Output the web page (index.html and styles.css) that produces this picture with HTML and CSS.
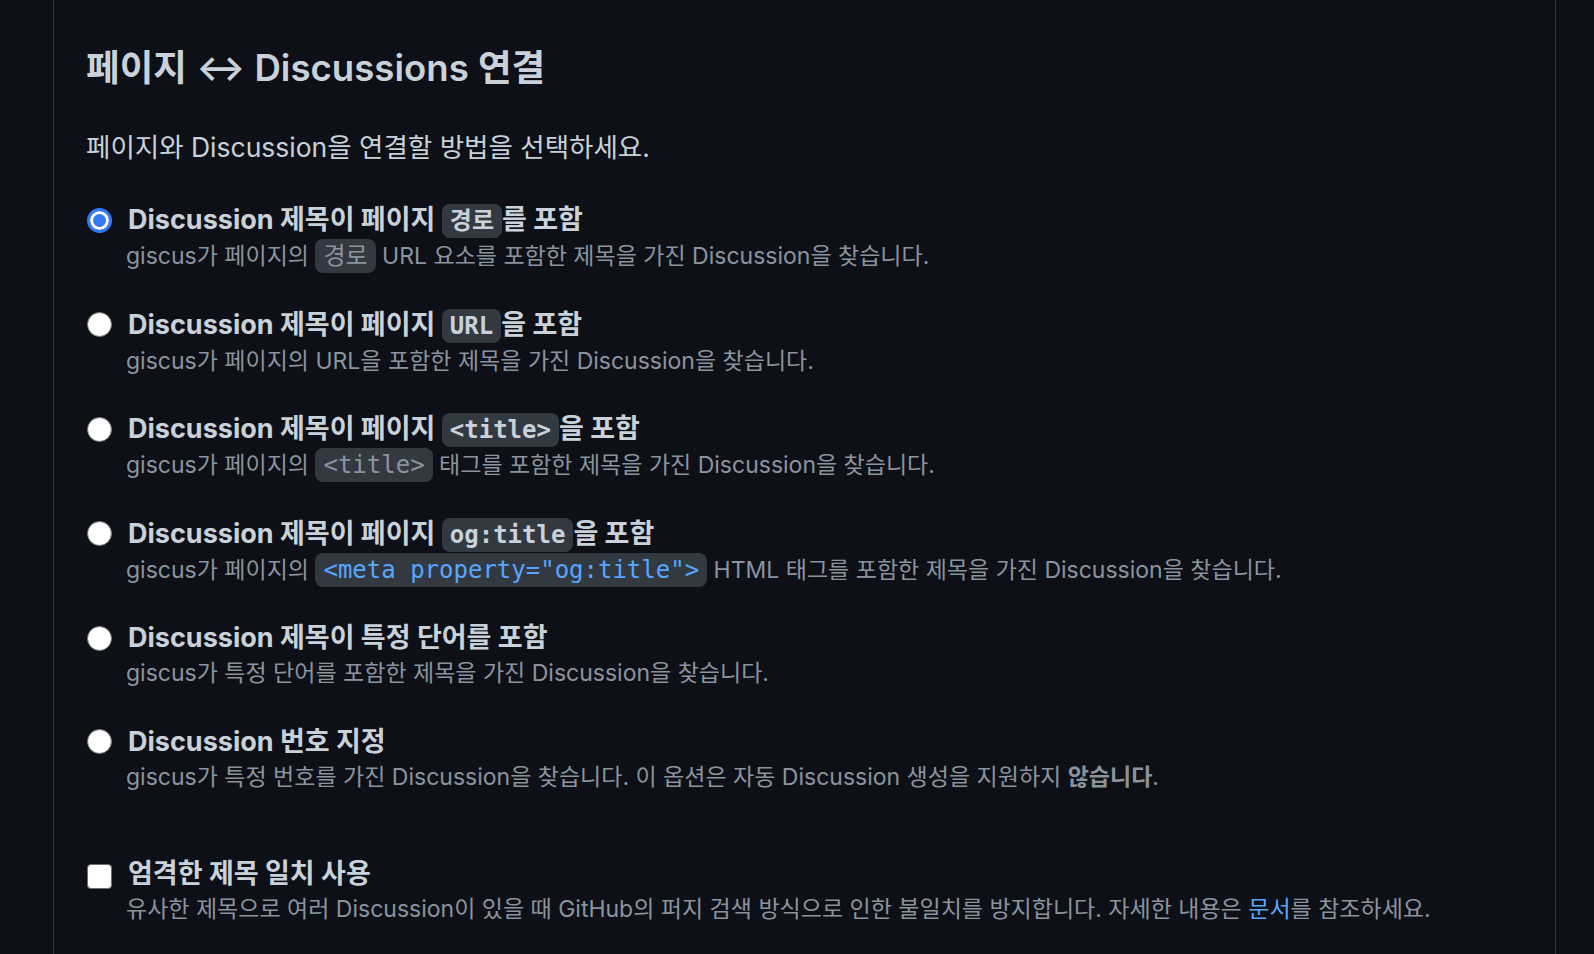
FILE: index.html
```html
<!DOCTYPE html>
<html lang="ko">
<head>
<meta charset="utf-8">
<title>페이지 ↔ Discussions 연결</title>
<link rel="stylesheet" href="styles.css">
</head>
<body>
<main class="card">
  <h2 class="heading">페이지 ↔ Discussions 연결</h2>
  <p class="lead">페이지와 Discussion을 연결할 방법을 선택하세요.</p>

  <div class="options">
    <label class="option">
      <input class="radio" type="radio" name="mapping" checked>
      <span class="text">
        <span class="title">Discussion 제목이 페이지 <code class="code">경로</code>를 포함</span>
        <span class="desc">giscus가 페이지의 <code class="code">경로</code> URL 요소를 포함한 제목을 가진 Discussion을 찾습니다.</span>
      </span>
    </label>
    <label class="option">
      <input class="radio" type="radio" name="mapping">
      <span class="text">
        <span class="title">Discussion 제목이 페이지 <code class="code">URL</code>을 포함</span>
        <span class="desc">giscus가 페이지의 URL을 포함한 제목을 가진 Discussion을 찾습니다.</span>
      </span>
    </label>
    <label class="option">
      <input class="radio" type="radio" name="mapping">
      <span class="text">
        <span class="title">Discussion 제목이 페이지 <code class="code">&lt;title&gt;</code>을 포함</span>
        <span class="desc">giscus가 페이지의 <code class="code">&lt;title&gt;</code> 태그를 포함한 제목을 가진 Discussion을 찾습니다.</span>
      </span>
    </label>
    <label class="option">
      <input class="radio" type="radio" name="mapping">
      <span class="text">
        <span class="title">Discussion 제목이 페이지 <code class="code">og:title</code>을 포함</span>
        <span class="desc">giscus가 페이지의 <code class="code code-link">&lt;meta property="og:title"&gt;</code> HTML 태그를 포함한 제목을 가진 Discussion을 찾습니다.</span>
      </span>
    </label>
    <label class="option">
      <input class="radio" type="radio" name="mapping">
      <span class="text">
        <span class="title">Discussion 제목이 특정 단어를 포함</span>
        <span class="desc">giscus가 특정 단어를 포함한 제목을 가진 Discussion을 찾습니다.</span>
      </span>
    </label>
    <label class="option">
      <input class="radio" type="radio" name="mapping">
      <span class="text">
        <span class="title">Discussion 번호 지정</span>
        <span class="desc">giscus가 특정 번호를 가진 Discussion을 찾습니다. 이 옵션은 자동 Discussion 생성을 지원하지 <strong>않습니다</strong>.</span>
      </span>
    </label>
  </div>

  <label class="option option-check">
    <input class="checkbox" type="checkbox">
    <span class="text">
      <span class="title">엄격한 제목 일치 사용</span>
      <span class="desc">유사한 제목으로 여러 Discussion이 있을 때 GitHub의 퍼지 검색 방식으로 인한 불일치를 방지합니다. 자세한 내용은 <a class="link" href="#">문서</a>를 참조하세요.</span>
    </span>
  </label>
</main>
</body>
</html>
```

FILE: styles.css
```css
html, body {
  margin: 0;
  padding: 0;
  background: #0d1117;
}

body {
  font-family: "Inter", "Noto Sans CJK KR", sans-serif;
  color: #c9d1d9;
}

.card {
  box-sizing: border-box;
  width: 1503px;
  min-height: 954px;
  margin-left: 53px;
  border-left: 1px solid #30363d;
  border-right: 1px solid #30363d;
  padding: 46px 32px 0 32px;
}

.heading {
  margin: 0;
  font-size: 36.6px;
  line-height: 45px;
  font-weight: 600;
  color: #c9d1d9;
}

.lead {
  margin: 35px 0 0 0;
  font-size: 26.5px;
  line-height: 42px;
  color: #c9d1d9;
}

.options {
  margin-top: 34px;
  display: flex;
  flex-direction: column;
  gap: 33.5px;
}

.option {
  display: flex;
  align-items: flex-start;
  gap: 14px;
  padding-left: 1px;
}

.option-check {
  margin-top: 62px;
}

.text {
  display: flex;
  flex-direction: column;
}

.title {
  display: block;
  margin-left: 2px;
  font-size: 27px;
  line-height: 36px;
  font-weight: 700;
  color: #c9d1d9;
  white-space: nowrap;
}

.desc {
  display: block;
  font-size: 23px;
  line-height: 34px;
  color: #8b949e;
  white-space: nowrap;
}

.desc strong {
  font-weight: 700;
}

.radio {
  appearance: none;
  -webkit-appearance: none;
  box-sizing: border-box;
  flex: none;
  width: 25px;
  height: 25px;
  margin: 5.5px 0 0 0;
  border-radius: 50%;
  background: #ffffff;
  border: 1.5px solid #6e6e6e;
}

.radio:checked {
  background: #3478f6;
  border: 3px solid #3478f6;
  box-shadow: inset 0 0 0 3px #ffffff;
}

.checkbox {
  appearance: none;
  -webkit-appearance: none;
  box-sizing: border-box;
  flex: none;
  width: 25px;
  height: 25px;
  margin: 8px 0 0 0;
  border-radius: 4px;
  background: #ffffff;
  border: 1.5px solid #6e6e6e;
}

.code {
  font-family: "DejaVu Sans Mono", "Noto Sans CJK KR", monospace;
  font-size: 24px;
  padding: 3px 8px;
  border-radius: 8px;
  background: rgba(110, 118, 129, 0.4);
}

.title .code {
  font-weight: 700;
  color: #c9d1d9;
}

.desc .code {
  font-weight: 400;
  color: #8b949e;
}

.desc .code-link {
  color: #58a6ff;
}

.link {
  color: #58a6ff;
  text-decoration: none;
}
```
